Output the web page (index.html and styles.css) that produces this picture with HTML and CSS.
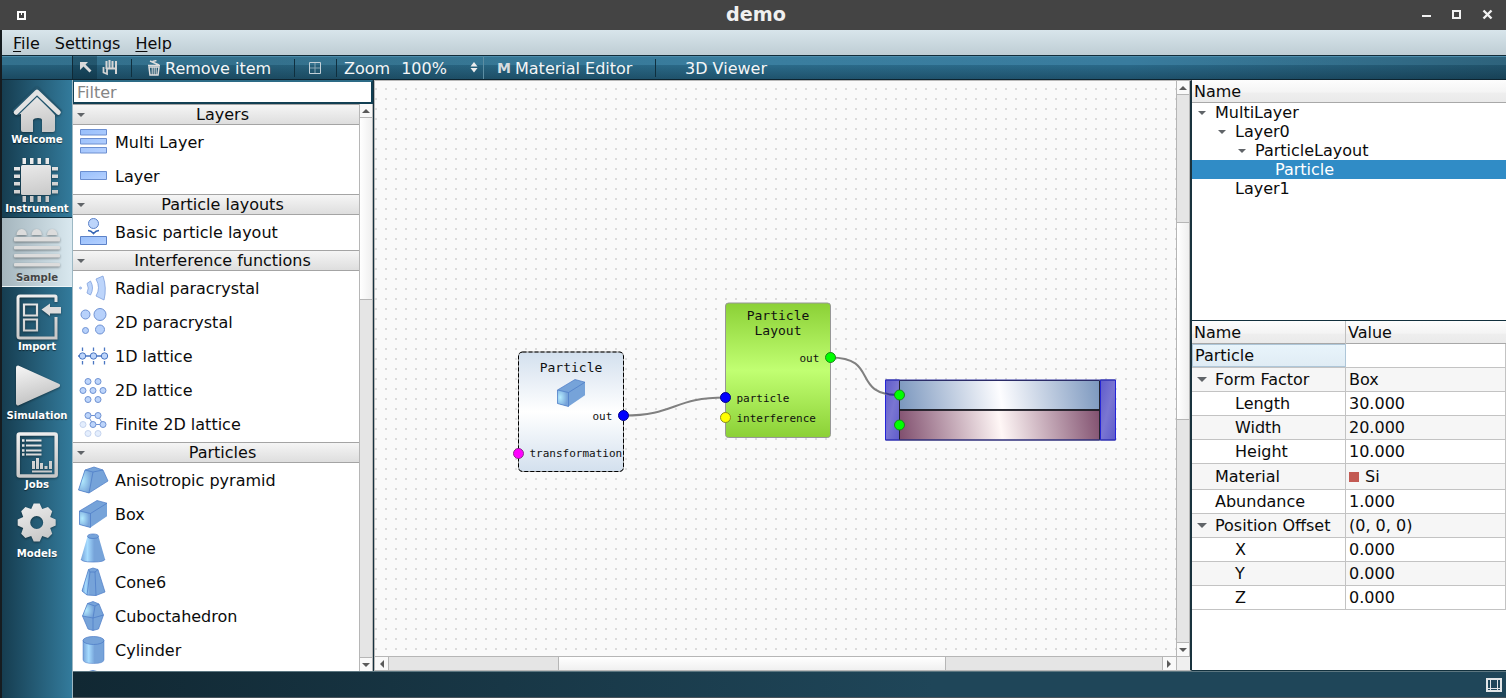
FILE: index.html
```html
<!DOCTYPE html>
<html lang="en">
<head>
<meta charset="utf-8">
<title>demo</title>
<link rel="stylesheet" href="styles.css">
</head>
<body>
<svg class="defs" width="0" height="0">
  <defs>
    <linearGradient id="metal" x1="0" y1="0" x2="0.3" y2="1"><stop offset="0" stop-color="#f4f4f4"/><stop offset="1" stop-color="#c4c4c4"/></linearGradient>
    <linearGradient id="metalAbs" gradientUnits="userSpaceOnUse" x1="0" y1="8" x2="8" y2="54"><stop offset="0" stop-color="#f4f4f4"/><stop offset="1" stop-color="#c8c8c8"/></linearGradient>
    <linearGradient id="metalGear" gradientUnits="userSpaceOnUse" x1="-8" y1="-19" x2="8" y2="19"><stop offset="0" stop-color="#ececec"/><stop offset="1" stop-color="#c6c6c6"/></linearGradient>
    <linearGradient id="bar" x1="0" y1="0" x2="1" y2="1"><stop offset="0" stop-color="#98bffb"/><stop offset="1" stop-color="#b6d1ff"/></linearGradient>
    <radialGradient id="glow" cx="0.25" cy="0.45" r="0.65"><stop offset="0" stop-color="#b4ecff"/><stop offset="1" stop-color="#76a3d9"/></radialGradient>
    <linearGradient id="shine" x1="0" y1="0" x2="1" y2="0"><stop offset="0" stop-color="#76a3d9"/><stop offset="0.27" stop-color="#a6dcff"/><stop offset="0.55" stop-color="#76a3d9"/></linearGradient>
    <linearGradient id="particleFill" x1="0" y1="0" x2="0" y2="1"><stop offset="0" stop-color="#d3e0ee"/><stop offset="0.5" stop-color="#fff"/><stop offset="1" stop-color="#d3e0ee"/></linearGradient>
    <linearGradient id="layoutFill" x1="0" y1="0" x2="0" y2="1"><stop offset="0" stop-color="#8bd036"/><stop offset="0.5" stop-color="#c1ff72"/><stop offset="1" stop-color="#8bd036"/></linearGradient>
    <linearGradient id="layerBlue" gradientUnits="userSpaceOnUse" x1="526" y1="330" x2="725" y2="298"><stop offset="0" stop-color="#7b97be"/><stop offset="0.5" stop-color="#fdfdff"/><stop offset="1" stop-color="#7b97be"/></linearGradient>
    <linearGradient id="layerPlum" gradientUnits="userSpaceOnUse" x1="526" y1="360" x2="725" y2="328"><stop offset="0" stop-color="#81506f"/><stop offset="0.5" stop-color="#fff7f6"/><stop offset="1" stop-color="#81506f"/></linearGradient>
    <linearGradient id="side" x1="0" y1="0" x2="1" y2="1"><stop offset="0" stop-color="#5f5ccb"/><stop offset="0.5" stop-color="#7a76d2"/><stop offset="1" stop-color="#5f5ccb"/></linearGradient>
  </defs>
  <symbol id="box-icon" viewBox="0 0 28 28">
    <path d="M0.5 11 18 .5 28 3.200v13L11.500 27.500.5 24.500Z" fill="#76a3d9"/>
    <path d="M.5 11 11.500 13.500v14L.5 24.500Z" fill="url(#glow)"/>
    <path d="M.5 11 18 .5 28 3.200 11.500 13.500v14L.5 24.500Z M.5 11l11 2.500" fill="none" stroke="#4a7ac6" stroke-width=".7"/>
  </symbol>
</svg>

<div class="window">
  <header class="titlebar">
    <svg class="win-menu" width="9" height="9"><path d="M0 0h9v9H0Z" fill="#fff"/><path d="M2 2h5v5H2Z" fill="#444"/><path d="M4 2h1v2H4Z" fill="#fff"/></svg>
    <h1>demo</h1>
    <svg class="win-buttons" width="72" height="12" fill="none" stroke="#f2f2f2"><path d="M1 7h9" stroke-width="2"/><path d="M32 2h7v7h-7Z" stroke-width="2"/><path d="m62.500 1.500 8 8m0-8-8 8" stroke-width="2.400"/></svg>
  </header>

  <nav class="menubar"><span><u>F</u>ile</span><span>Settings</span><span><u>H</u>elp</span></nav>

  <div class="toolbar">
    <div class="tb-empty"></div>
    <div class="tb-arrow"><svg width="24" height="23"><path d="M7 6h8l-2.500 2.500 6 6-2 2-6-6L7 14Z" fill="#dadada"/></svg></div>
    <div class="tb-hand"><svg width="24" height="23" fill="none" stroke="#d5d5d5"><path d="M9.500 5v8M12.500 4v9M15.500 5v8" stroke-width="2"/><path d="M19 5v13" stroke-width="2"/><path d="M6.500 11v5.500l3.500 1.500V12.500H19" stroke-width="1.800"/></svg></div>
    <i class="sep s1"></i>
    <div class="tb-remove"><svg width="14" height="16" fill="none" stroke="#ddd"><path d="M1 5.500h12M3 1l9 4M5.500 1.500l4-1" stroke-width="1.500"/><path d="M2 7h10l-1 8H3Z" stroke-width="1.500"/><path d="M5.200 7v8M7.200 7v8M9.200 7v8" stroke-width="1"/></svg><span>Remove item</span></div>
    <i class="sep s2"></i>
    <svg class="tb-grid" width="12" height="12" fill="none" stroke="#c2d0d8"><path d="M.5.5h11v11H.5Z"/><path d="M6 1v10M1 6h10" stroke="#86a5b4"/></svg>
    <i class="sep s3"></i>
    <div class="tb-zoom"><span>Zoom</span><span>100%</span><svg width="8" height="12"><path d="M4 0 7.500 4.500H.5ZM4 10.500.5 6h7Z" fill="#eee"/></svg></div>
    <div class="tb-material"><b>M</b><span>Material Editor</span></div>
    <i class="sep s4"></i>
    <div class="tb-viewer"><span>3D Viewer</span></div>
  </div>

  <main class="main">
    <aside class="modes">
      <div class="mode"><svg width="70" height="54"><g fill="url(#metalAbs)"><path d="M14 35 35 15l5 5 13 15v15q0 2-2 2H40V40q0-2-4-2t-5 2v12H21q-2 0-2-2V34Z"/></g><path d="M13 33 35 11.500 57 33" fill="none" stroke="#24566e" stroke-width="8"/><path d="M14 32.500 35 12 56.500 32.500" fill="none" stroke="#e3e3e3" stroke-width="4.600" stroke-linecap="round" stroke-linejoin="round"/></svg><span>Welcome</span></div>
      <div class="mode"><svg width="70" height="54"><g fill="url(#metalAbs)"><rect x="19" y="16" width="30" height="30" rx="1.500"/><path d="M20.500 9h3.500v6h-3.500ZM28 9h3.500v6H28ZM35.500 9H39v6h-3.500ZM43.500 9H47v6h-3.500ZM20.500 47h3.500v6h-3.500ZM28 47h3.500v6H28ZM35.500 47H39v6h-3.500ZM43.500 47H47v6h-3.500ZM12 18h6v3.500h-6ZM12 25.500h6V29h-6ZM12 33h6v3.500h-6ZM12 41h6v3.500h-6ZM50 18h6v3.500h-6ZM50 25.500h6V29h-6ZM50 33h6v3.500h-6ZM50 41h6v3.500h-6Z"/></g></svg><span>Instrument</span></div>
      <div class="mode active"><svg width="70" height="54"><g fill="#dcdcdc"><path d="M14.500 17a5.200 6 0 0 1 10.400 0ZM29.500 17a5.200 6 0 0 1 10.400 0ZM45 17a5.200 6 0 0 1 10.400 0Z"/><rect x="12" y="19" width="46" height="4.500" rx="1"/><rect x="12" y="28" width="46" height="3.500" rx="1"/><rect x="12" y="36" width="46" height="3.500" rx="1"/><rect x="12" y="45" width="46" height="3.500" rx="1"/></g></svg><span>Sample</span></div>
      <div class="mode"><svg width="70" height="54"><g fill="none" stroke="url(#metalAbs)" stroke-width="3"><path d="M54 15V10q0-1-1-1H18q-2 0-2 2v38q0 2 2 2h36V30"/><path d="M22 17.500h13v11H22ZM22 32.500h13v11H22Z" stroke-width="2.200"/></g><path d="M39.500 22.500 48 16.500v3.500h11v6.500H48V29Z" fill="#ddd"/></svg><span>Import</span></div>
      <div class="mode"><svg width="70" height="54"><path d="M16 11.500 56 29.500 16 47.500Z" fill="url(#metal)" stroke="url(#metal)" stroke-width="4" stroke-linejoin="round"/></svg><span>Simulation</span></div>
      <div class="mode"><svg width="70" height="54"><g fill="none" stroke="url(#metalAbs)"><rect x="16.200" y="9" width="38" height="42" rx="1.500" stroke-width="3.500"/><path d="M24 15.500h15.500M24 20.500h15.500M24 25.500h15.500M24 29.500h15.500" stroke-width="2"/><path d="M20 15.500h2.500M20 20.500h2.500M20 25.500h2.500M20 29.500h2.500" stroke-width="2.500"/><path d="M30 46.500h20" stroke-width="2"/><path d="M31.500 44v-8M35.500 44V33M39.500 44v-6M44 44v-3M48.500 44v-8" stroke-width="3"/></g></svg><span>Jobs</span></div>
      <div class="mode"><svg width="70" height="54"><g transform="translate(34.700 28.500)"><path fill="url(#metalGear)" fill-rule="evenodd" d="M-5.500-13.500-3-19H3L5.500-13.500 11.300-15.500 15.500-11.300 13.500-5.500 19-3V3L13.500 5.500 15.500 11.300 11.300 15.500 5.500 13.500 3 19H-3L-5.500 13.500-11.300 15.500-15.500 11.300-13.500 5.500-19 3V-3L-13.500-5.500-15.500-11.300-11.300-15.500ZM-6.500 0a6.500 6.500 0 1 0 13 0a6.500 6.500 0 1 0-13 0Z"/></g></svg><span>Models</span></div>
    </aside>

    <section class="palette">
      <div class="filter">Filter</div>
      <div class="palette-body">
        <div class="palette-list">
          <h2>Layers</h2>
          <div class="item"><svg viewBox="0 0 28 28"><g fill="url(#bar)" stroke="#6c8fd0"><path d="M1.500 1.500h26v5.500h-26ZM1.500 10.500h26V16h-26ZM1.500 19.500h26V25h-26Z"/></g></svg>Multi Layer</div>
          <div class="item"><svg viewBox="0 0 28 28"><path d="M1.500 9.500h26v8h-26Z" fill="url(#bar)" stroke="#6c8fd0"/></svg>Layer</div>
          <h2>Particle layouts</h2>
          <div class="item"><svg viewBox="0 0 28 28"><g stroke="#5c82c8"><circle cx="14.500" cy="5.500" r="5" fill="#bdd5fb"/><path d="M9 12.500q3 0 5.500 3 2.500-3 5.500-3" fill="none" stroke="#3565b5" stroke-width="1.500"/><path d="M1.500 18.500h26v8h-26Z" fill="url(#bar)"/></g></svg>Basic particle layout</div>
          <h2>Interference functions</h2>
          <div class="item"><svg viewBox="0 0 28 28"><g fill="#bdd5fb" stroke="#7fa0dc" stroke-width=".8"><circle cx="1.500" cy="14" r="1" /><path d="M8 9.500 11.500 7q4 7 0 14L8 19q2.500-5 0-9.500ZM17 5l7-3q4 12 1 24l-8-4q5-8 0-17Z"/></g></svg>Radial paracrystal</div>
          <div class="item"><svg viewBox="0 0 28 28"><g fill="#b7d1fb" stroke="#6f92d3"><circle cx="6.500" cy="6.500" r="4.500"/><circle cx="21" cy="6.500" r="6"/><circle cx="6.500" cy="22.500" r="3"/><circle cx="21" cy="21.500" r="4.500"/></g></svg>2D paracrystal</div>
          <div class="item"><svg viewBox="0 0 28 28"><g fill="#bdd5fb" stroke="#4a76c2"><path d="M-1 14h30M3.500 5.500v3.500M3.500 19v3.500M14.500 5.500v3.500M14.500 19v3.500M25.500 5.500v3.500M25.500 19v3.500" stroke-width="1.300"/><circle cx="3.500" cy="14" r="3.200"/><circle cx="14.500" cy="14" r="3.200"/><circle cx="25.500" cy="14" r="3.200"/></g></svg>1D lattice</div>
          <div class="item"><svg viewBox="0 0 28 28"><g fill="#bdd5fb" stroke="#6f92d3"><circle cx="9" cy="5.500" r="3"/><circle cx="19" cy="5.500" r="3"/><circle cx="4" cy="14.500" r="3"/><circle cx="14" cy="14.500" r="3"/><circle cx="24" cy="14.500" r="3"/><circle cx="9" cy="23.500" r="3"/><circle cx="19" cy="23.500" r="3"/></g></svg>2D lattice</div>
          <div class="item"><svg viewBox="0 0 28 28"><g fill="#bdd5fb" stroke="#6f92d3"><path d="M9 5.500h10l5 9H14Z" fill="none"/><circle cx="9" cy="5.500" r="3"/><circle cx="19" cy="5.500" r="3"/><circle cx="14" cy="14.500" r="3"/><circle cx="24" cy="14.500" r="3"/><g opacity=".4"><circle cx="4" cy="14.500" r="3"/><circle cx="9" cy="23.500" r="3"/><circle cx="19" cy="23.500" r="3"/></g></g></svg>Finite 2D lattice</div>
          <h2>Particles</h2>
          <div class="item"><svg viewBox="0 0 28 28"><path d="M6 4 15 1 24 4 29 15 10 27-.5 24Z" fill="#76a3d9"/><path d="M6 4 14 6 10 27-.5 24Z" fill="url(#glow)"/><path d="M6 4 15 1 24 4 14 6ZM14 6 10 27M24 4l5 11L10 27-.5 24 6 4" fill="none" stroke="#4a7ac6" stroke-width=".7"/></svg>Anisotropic pyramid</div>
          <div class="item"><svg viewBox="0 0 28 28"><use href="#box-icon"/></svg>Box</div>
          <div class="item"><svg viewBox="0 0 28 28"><path d="M8.500 2.500 2 25q0 3 12 3t12-3L19.500 2.500Z" fill="url(#shine)"/><ellipse cx="14" cy="2.500" rx="5.500" ry="2.500" fill="#76a3d9"/><path d="M8.500 2.500q0-2.500 5.500-2.500t5.500 2.500q0 2-5.500 2T8.500 2.500M2 25q0 3 12 3t12-3" fill="none" stroke="#4a7ac6" stroke-width=".7"/></svg>Cone</div>
          <div class="item"><svg viewBox="0 0 28 28"><path d="M9.500 1.500 14 0l5 1.500L26 24l-9 3.500-9-.5-5-4Z" fill="#76a3d9"/><path d="M9.500 1.500 11 4h5l1 23.500-9-.5-5-4Z" fill="url(#shine)"/><path d="M9.500 1.500 14 0l5 1.500L16 4h-5ZM11 4 8 27M16 4l1 23.500M9.500 1.500 3 23l5 4 9 .5L26 24 19 1.500" fill="none" stroke="#4a7ac6" stroke-width=".7"/></svg>Cone6</div>
          <div class="item"><svg viewBox="0 0 28 28"><path d="M8.500 1.500 14-.5l6 2.500 4.500 11-5 14-5.500 1.500-5-1.500L3.500 14Z" fill="#76a3d9"/><path d="M8.500 1.500 16 4l-2 12L3.500 14Z" fill="url(#glow)"/><path d="M8.500 1.500 14-.5l6 2.500-4 2ZM16 4l-2 12L3.500 14l5-12.500M20 2l4.500 11L14 16v12.500M3.500 14 9 27l5 1.500 5.500-1.500 5-14" fill="none" stroke="#4a7ac6" stroke-width=".7"/></svg>Cuboctahedron</div>
          <div class="item"><svg viewBox="0 0 28 28"><path d="M4 4.500v19q0 4 10.500 4t10.500-4v-19Z" fill="url(#shine)"/><ellipse cx="14.500" cy="4.500" rx="10.500" ry="4" fill="#76a3d9" stroke="#4a7ac6" stroke-width=".7"/><path d="M4 4.500v19q0 4 10.500 4t10.500-4v-19" fill="none" stroke="#4a7ac6" stroke-width=".5"/></svg>Cylinder</div>
          <div class="item"><svg viewBox="0 0 28 28"><path d="M8 2q6-3 12 0L25 25H3Z" fill="#76a3d9" stroke="#4a7ac6" stroke-width=".7"/></svg></div>
        </div>
        <div class="vscroll list-scroll"><span class="btn up"></span><span class="thumb"></span><span class="track"></span><span class="btn down"></span></div>
      </div>
    </section>

    <section class="canvas-panel">
      <div class="canvas-row">
        <div class="canvas">
          <svg width="801" height="574">
            <g transform="translate(-375 -82)">
              <g transform="translate(375 82)">
                <path d="M510.500 298v60h14v-60Z" fill="url(#side)" stroke="#2424d8"/>
                <path d="M725.500 298v60h15v-60Z" fill="url(#side)" stroke="#2424d8"/>
                <path d="M524.500 298.500h200v29.500h-200Z" fill="url(#layerBlue)" stroke="#22222e"/>
                <path d="M524.500 328h200v30h-200Z" fill="url(#layerPlum)" stroke="#22222e"/>
                <path d="M524.500 328h200" stroke="#181820" stroke-width="1.500"/>
                <path d="M510.500 298h230M510.500 358h230" stroke="#3436a0" stroke-width="1.200"/>
              </g>
              <g fill="none" stroke="#808080" stroke-width="2"><path d="M624 415.500C675 415.500 674 397.500 725 397.500"/><path d="M830.500 357.500C880 357.500 850 395 899 395"/></g>
              <path d="M885 393l5 1.500 9 .5" fill="none" stroke="#313199" stroke-width="1.800"/>
              <rect x="518.500" y="352" width="105" height="119.500" rx="4" fill="url(#particleFill)" stroke="#999"/>
              <rect x="518.500" y="352" width="105" height="119.500" rx="4" fill="none" stroke="#000" stroke-dasharray="4 2"/>
              <rect x="725.500" y="303" width="105" height="134.500" rx="3" fill="url(#layoutFill)" stroke="#979797"/>
              <use href="#box-icon" x="557" y="379" width="28" height="28"/>
              <g class="node-title"><text x="571" y="372">Particle</text><text x="778" y="320">Particle</text><text x="778" y="335">Layout</text></g>
              <g class="port-label"><text x="592.500" y="420">out</text><text x="529.500" y="457">transformation</text><text x="799.500" y="362">out</text><text x="736.500" y="402">particle</text><text x="736.500" y="422">interference</text></g>
              <g stroke-width="1">
                <circle cx="623.500" cy="415.500" r="5" fill="#00f" stroke="#00008b"/><circle cx="518.500" cy="453.500" r="5" fill="#f0f" stroke="#8b2a8b"/>
                <circle cx="725.500" cy="397.500" r="5" fill="#00f" stroke="#00008b"/><circle cx="725.500" cy="417.500" r="5" fill="#ff0" stroke="#8b8b20"/>
                <circle cx="830.500" cy="357.500" r="5" fill="#0f0" stroke="#168a16"/><circle cx="899.500" cy="395" r="5" fill="#0f0" stroke="#168a16"/><circle cx="899.500" cy="425" r="5" fill="#0f0" stroke="#168a16"/>
              </g>
            </g>
          </svg>
        </div>
        <div class="vscroll canvas-vscroll"><span class="btn up"></span><span class="track before"></span><span class="thumb"></span><span class="track"></span><span class="btn down"></span></div>
      </div>
      <div class="hscroll"><span class="btn left"></span><span class="track before"></span><span class="thumb"></span><span class="track"></span><span class="btn right"></span><span class="corner"></span></div>
    </section>

    <aside class="inspector">
      <div class="tree">
        <div class="head">Name</div>
        <div class="node d0 open">MultiLayer</div>
        <div class="node d1 open">Layer0</div>
        <div class="node d2 open">ParticleLayout</div>
        <div class="node d3 selected">Particle</div>
        <div class="node d1">Layer1</div>
      </div>
      <div class="props">
        <div class="head"><span>Name</span><span>Value</span></div>
        <div class="prop current"><span>Particle</span><span></span></div>
        <div class="prop p1 open"><span>Form Factor</span><span>Box</span></div>
        <div class="prop p2"><span>Length</span><span>30.000</span></div>
        <div class="prop p2"><span>Width</span><span>20.000</span></div>
        <div class="prop p2"><span>Height</span><span>10.000</span></div>
        <div class="prop p1 tall"><span>Material</span><span><i class="swatch"></i>Si</span></div>
        <div class="prop p1"><span>Abundance</span><span>1.000</span></div>
        <div class="prop p1 open"><span>Position Offset</span><span>(0, 0, 0)</span></div>
        <div class="prop p2"><span>X</span><span>0.000</span></div>
        <div class="prop p2"><span>Y</span><span>0.000</span></div>
        <div class="prop p2"><span>Z</span><span>0.000</span></div>
      </div>
    </aside>
    <footer class="statusbar"><svg width="16" height="14" fill="none" stroke="#e2e6e8"><path d="M1 1h14v12H1Z" stroke-width="2"/><path d="M4.500 2v10M11.500 2v10M2 10.500h12"/></svg></footer>
  </main>
</div>
</body>
</html>
```

FILE: styles.css
```css
* { box-sizing: border-box; }
body { margin: 0; width: 1506px; height: 698px; overflow: hidden; background: #161c20; font: 16px/19px "DejaVu Sans", sans-serif; color: #0b0b0b; }
.defs { position: absolute; }
h1, h2 { margin: 0; font-weight: normal; }
.window { display: flex; flex-direction: column; height: 698px; padding-left: 2px; }

.titlebar { flex: 0 0 30px; display: flex; align-items: center; justify-content: space-between; margin-left: -2px; padding: 0 13px 0 17px; background: #444; }
.titlebar h1 { font: bold 19.200px/29px "DejaVu Sans", sans-serif; color: #f0f0f0; padding-left: 65px; height: 30px; }

.menubar { flex: 0 0 25px; display: flex; gap: 15px; padding: 4px 0 0 11px; background: linear-gradient(#d8e5eb, #becdd4); }
.menubar u { text-underline-offset: 2px; text-decoration-thickness: 1px; }

.toolbar { flex: 0 0 25px; display: flex; align-items: center; border-top: 1px solid #122c39; border-bottom: 1px solid #0d2430; color: #f4f6f7; background: linear-gradient(#4d8dac 0 1px, transparent 1px), linear-gradient(rgba(255,255,255,.04) 0 40%, rgba(0,20,32,.15) 41%, rgba(0,20,32,.38)), linear-gradient(90deg, #2b6b89, #2c6b88 18%, #32799b 50%, #31779a 75%, #265d77); }
.toolbar span { padding-top: 1px; }
.tb-empty { width: 71px; height: 23px; border-right: 1px solid #102a37; }
.tb-arrow { width: 24px; height: 23px; background: rgba(0,25,40,.3); }
.tb-hand { width: 24px; height: 23px; }
.tb-arrow svg, .tb-hand svg { display: block; }
.sep { width: 1px; height: 18px; background: #0f2f3e; }
.s1 { margin: 0 15px 0 10px; }
.tb-remove { display: flex; align-items: center; gap: 4px; width: 146px; }
.s2 { margin-right: 14px; margin-left: 1px; }
.s3 { margin: 0 7px 0 15px; }
.tb-zoom { display: flex; align-items: center; width: 140px; height: 22px; border-right: 1px solid #5d8ea3; }
.tb-zoom span:nth-child(2) { margin-left: 11px; margin-right: auto; }
.tb-zoom svg { margin-right: 5px; }
.tb-material { display: flex; width: 171px; padding-left: 13px; }
.tb-material b { width: 18px; padding-top: 1px; font-size: 14px; color: #d7dde0; }
.tb-viewer { display: flex; margin-left: 29px; }

.main { flex: 1; display: grid; grid-template-columns: 71px 301px 818px 1fr; grid-template-rows: 591px 27px; min-height: 0; }

.modes { grid-row: 1 / 3; background: linear-gradient(90deg, #163d50, #337b9c); border-right: 1px solid #9db8c4; }
.mode { height: 69px; display: flex; flex-direction: column; align-items: center; color: #fff; font: bold 10.100px/12px "DejaVu Sans", sans-serif; text-shadow: 0 1px 1px #0008; }
.mode svg { display: block; filter: drop-shadow(0 1px 1px #0006); }
.mode.active { background: linear-gradient(90deg, #a4b5bd, #d9e8ef); color: #444; text-shadow: 0 1px 0 #fff8; box-shadow: 0 -1px #102f3e; border-bottom: 1px solid #eff5f7; }

.palette { display: flex; flex-direction: column; border-right: 1px solid #17323f; background: #fff; }
.filter { flex: 0 0 24px; padding: 1px 0 0 3px; border: solid #123f53; border-width: 2px 2px 2px 1px; border-top-color: #2d6b86; color: #858585; background: #fff; }
.palette-body { flex: 1; display: flex; min-height: 0; }
.palette-list { flex: 1; overflow: hidden; }
.palette h2 { position: relative; height: 21px; margin-top: 1px; padding: 0 0 0 13px; border: solid #a4a4a4; border-width: 1px 0; background: linear-gradient(#f5f5f5, #dedede); font-size: 16px; line-height: 19px; text-align: center; }
.palette h2:first-child { margin-top: 0; }
.palette h2::before, .open::before { content: ""; border: 4px solid transparent; border-top-color: #606468; border-bottom: 0; position: absolute; left: 4px; top: 8px; }
.item { height: 34px; display: flex; align-items: center; gap: 8px; padding-left: 6px; }
.item svg { width: 28px; height: 28px; overflow: visible; }

.vscroll { display: flex; flex-direction: column; width: 14px; border: 1px solid #b6b6b6; border-width: 0 1px; }
.track { flex: 1; background: #e5e5e5; }
.thumb { background: linear-gradient(90deg, #fff, #efefef); border: solid #b6b6b6; border-width: 1px 0; }
.btn { flex: 0 0 14px; display: grid; place-items: center; background: #f9f9f9; }
.btn::before { content: ""; border: 4px solid transparent; }
.up::before { border-top: 0; border-bottom-color: #5a5a5a; }
.down::before { border-bottom: 0; border-top-color: #5a5a5a; }
.left::before { border-left: 0; border-right-color: #5a5a5a; }
.right::before { border-right: 0; border-left-color: #5a5a5a; }
.btn.up, .btn.left { flex-basis: 13px; }
.down { border-top: 1px solid #b6b6b6; }
.list-scroll .thumb { height: 183px; }

.canvas-panel { display: flex; flex-direction: column; border: solid #b8b8b8; border-width: 1px 0 1px 1px; border-right: 2px solid #19323d; min-width: 0; }
.canvas-row { display: flex; height: 575px; }
.canvas { width: 801px; background: linear-gradient(#fafafa 0 7px, transparent 7px 9px, #fafafa 9px) 0 0 / 10px 10px, linear-gradient(90deg, #dcdcdc 0 2px, #fafafa 2px) 0 0 / 10px 10px; }
.canvas svg { display: block; margin-top: 1px; }
.node-title { font: 13px "DejaVu Sans Mono", monospace; text-anchor: middle; fill: #101010; }
.port-label { font: 11px "DejaVu Sans Mono", monospace; fill: #101010; }
.canvas-vscroll .before { flex: 0 0 128px; border-top: 1px solid #b6b6b6; }
.canvas-vscroll .thumb { height: 198px; }
.hscroll { display: flex; height: 14px; border-top: 1px solid #b6b6b6; }
.hscroll .before { flex: 0 0 170px; border-left: 1px solid #b6b6b6; }
.hscroll .thumb { width: 388px; border-width: 0 1px; background: linear-gradient(#fff, #f0f0f0); }
.hscroll .right { border-left: 1px solid #b6b6b6; padding-right: 2px; }
.corner { flex: 0 0 14px; background: #efefef; border-left: 1px solid #b6b6b6; }

.inspector { background: #fff; border-bottom: 1px solid #12303d; }
.tree { height: 241px; border-bottom: 1px solid #12303d; }
.head { height: 23px; padding: 2px; border-bottom: 1px solid #a8a8a8; background: linear-gradient(#fdfdfd, #f4f4f4 55%, #eee 60%, #eaeaea); }
.node { position: relative; height: 19px; }
.d0 { padding-left: 23px; }
.d1 { padding-left: 43px; }
.d2 { padding-left: 63px; }
.d3 { padding-left: 83px; }
.node.open::before { left: 6px; top: 8px; }
.node.d1.open::before { left: 26px; }
.node.d2.open::before { left: 46px; }
.selected { background: #308cc6; color: #fff; }
.props .head { display: grid; grid-template-columns: 154px 1fr; padding: 0; }
.props .head span { padding: 2px; }
.props .head span:first-child { border-right: 1px solid #c0c0c0; }
.prop { position: relative; display: grid; grid-template-columns: 154px 1fr; height: 24px; border-bottom: 1px solid #c3c3c3; }
.prop span { padding: 2px 3px; border-right: 1px solid #c3c3c3; }
.prop:nth-child(odd) { background: #f6f6f6; }
.prop.p1 span:first-child { padding-left: 23px; }
.prop.p2 span:first-child { padding-left: 43px; }
.prop.open::before { left: 5px; top: 9px; border-width: 5px; border-bottom: 0; }
.prop.tall { height: 26px; line-height: 21px; }
.prop.current span:first-child { background: linear-gradient(#e8f4fb, #e0ecf4); border: 1px solid #aec6d8; padding: 1px 2px; }
.swatch { display: inline-block; width: 10px; height: 10px; margin-right: 6px; background: #c35a53; }

.statusbar { grid-column: 2 / 5; display: flex; align-items: center; justify-content: flex-end; padding-right: 4px; border-top: 1px solid #5c7680; border-bottom: 1px solid #46525a; background: linear-gradient(90deg, #112833, #1f4659 60%, #1f4659); }
```
